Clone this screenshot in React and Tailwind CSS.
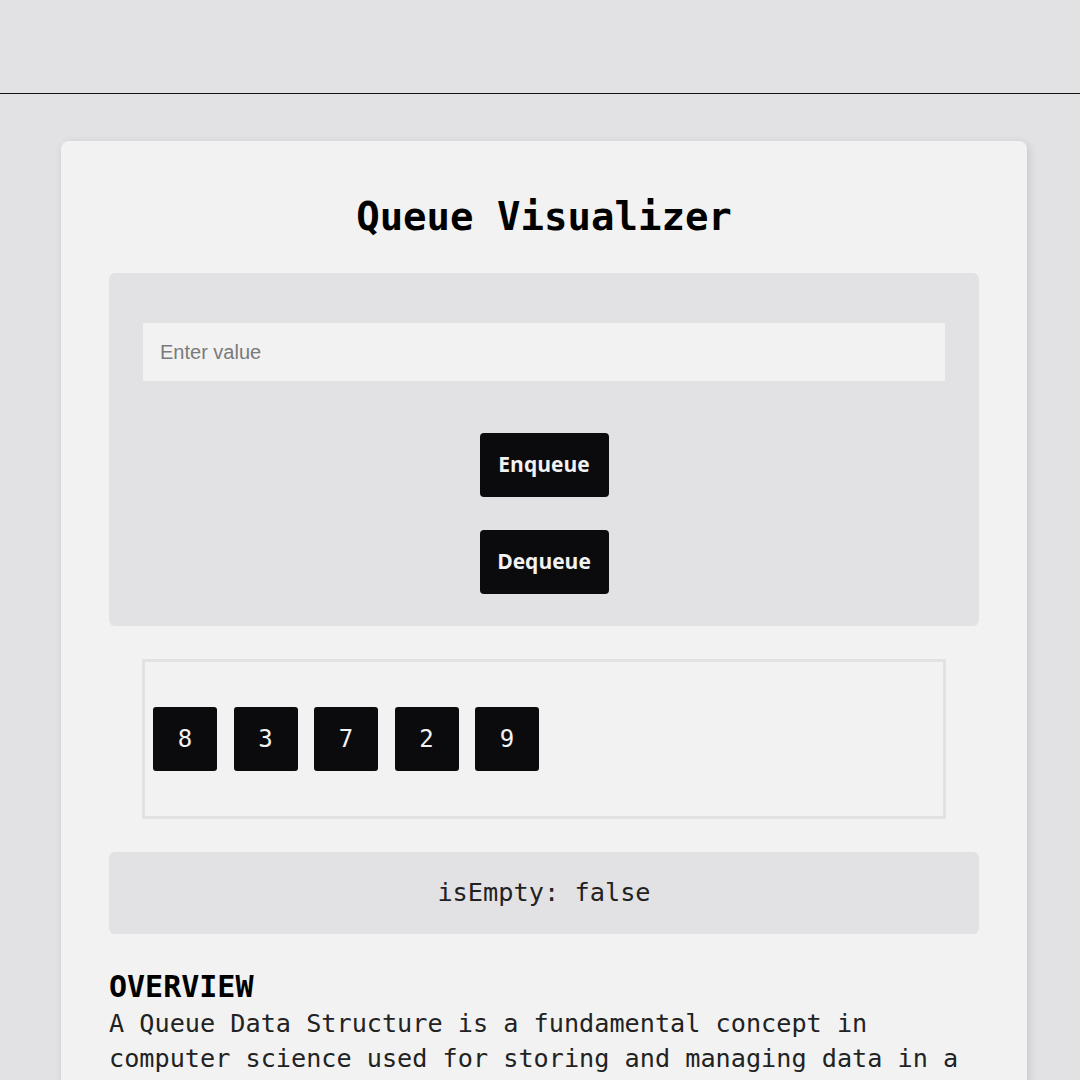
import React, { useState } from 'react';

const mono = { fontFamily: '"DejaVu Sans Mono", "Liberation Mono", monospace' };

const App = () => {
  const [queue] = useState([8, 3, 7, 2, 9]);
  const [value, setValue] = useState('');

  return (
    <div className="min-h-screen bg-[#e2e2e4]" style={mono}>
      {/* Header */}
      <div className="h-[94px] border-b border-[#111]" />

      {/* Card */}
      <div className="ml-[61px] mt-[47px] w-[966px] rounded-lg bg-[#f2f2f2] px-12 pb-10 pt-[52px] shadow-[2px_2px_8px_rgba(0,0,0,0.12)]">
        <h1 className="text-center text-[39px] font-bold leading-[48px] text-black">Queue Visualizer</h1>

        {/* Controls */}
        <div className="mt-[32px] flex flex-col items-center rounded-md bg-[#e2e2e4] px-[34px] pb-8 pt-[50px]">
          <input
            value={value}
            onChange={(e) => setValue(e.target.value)}
            placeholder="Enter value"
            className="h-[58px] w-full bg-[#f2f2f2] px-[17px] text-[20px] text-black outline-none placeholder:text-[#7a7a7a]"
            style={{ fontFamily: '"Liberation Sans", Arial, sans-serif' }}
          />
          <button
            className="mt-[52px] h-16 w-[129px] rounded-[4px] bg-[#0b0b0d] text-[21px] font-bold text-[#f2f2f2]"
            style={{ fontFamily: '"Open Sans", "Noto Sans", sans-serif' }}
          >
            Enqueue
          </button>
          <button
            className="mt-[33px] h-16 w-[129px] rounded-[4px] bg-[#0b0b0d] text-[21px] font-bold text-[#f2f2f2]"
            style={{ fontFamily: '"Open Sans", "Noto Sans", sans-serif' }}
          >
            Dequeue
          </button>
        </div>

        {/* Queue */}
        <div className="mx-[33px] mt-[33px] flex h-[160px] items-center gap-[16.5px] border-[3px] border-[#e2e2e4] px-2">
          {queue.map((n, i) => (
            <div
              key={i}
              className="flex h-16 w-16 items-center justify-center rounded-[3px] bg-[#0b0b0d] text-[24px] text-[#f2f2f2]"
            >
              {n}
            </div>
          ))}
        </div>

        {/* Status */}
        <div className="mt-[33px] flex h-[82px] items-center justify-center rounded-md bg-[#e2e2e4] text-[25.3px] text-[#222]">
          isEmpty: false
        </div>

        {/* Overview */}
        <h2 className="mt-[36px] text-[30px] font-bold leading-[34px] text-black">OVERVIEW</h2>
        <p className="mt-[2px] text-[25.2px] leading-[35px] text-[#222]">
          A Queue Data Structure is a fundamental concept in computer science used for storing and managing data in a
          specific order. It follows the principle of "First in, First out" (FIFO), where the first element added to the
          queue is the first one to be removed.
        </p>
      </div>
    </div>
  );
};

export default App;
